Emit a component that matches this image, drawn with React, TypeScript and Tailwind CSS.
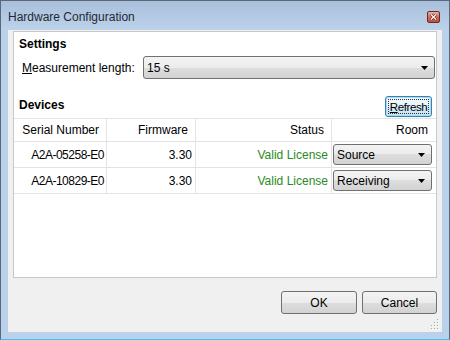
const combo =
  "flex items-center justify-between border border-[#707070] rounded-[3px] bg-[linear-gradient(#f3f3f3,#ececec_50%,#dedede_50%,#d2d2d2)] pl-[3px] pr-[6px] text-black";
const button =
  "flex items-center justify-center border border-[#707070] rounded-[3px] bg-[linear-gradient(#f3f3f3,#ececec_50%,#dedede_50%,#d2d2d2)] text-black";

function Arrow() {
  return (
    <svg width="7" height="4" viewBox="0 0 7 4">
      <path d="M0 0h7L3.5 4z" fill="#000" />
    </svg>
  );
}

function Combo({ value, className }: { value: string; className: string }) {
  return (
    <div className={`${combo} ${className}`}>
      <span>{value}</span>
      <Arrow />
    </div>
  );
}

const devices = [
  { serial: "A2A-05258-E0", firmware: "3.30", status: "Valid License", room: "Source" },
  { serial: "A2A-10829-E0", firmware: "3.30", status: "Valid License", room: "Receiving" },
];

export default function App() {
  return (
    <div className="w-[450px] h-[340px] flex flex-col border-t border-x border-[#5b6875] border-b border-b-[#3cc6e6] bg-[#b9d1ea] font-['Liberation_Sans',Arial,sans-serif] text-[12px] leading-[16px] text-black">
      {/* Title bar */}
      <div className="relative h-[29px] shrink-0 flex items-center pl-[7px] pt-[3px] bg-[linear-gradient(#a8bfdb,#bdd2ea)]">
        <span className="text-[#1e2a36]">Hardware Configuration</span>
        <div className="absolute right-[9px] top-[10px] w-[13px] h-[12px] flex items-center justify-center border border-[#6d2b24] rounded-[2px] bg-[linear-gradient(#eab0a5,#d46a5c_50%,#c24a3e)]">
          <svg width="7" height="6" viewBox="0 0 7 6">
            <path d="M1 0.5L6 5.5M6 0.5L1 5.5" stroke="#4a1a15" strokeWidth="2.4" />
            <path d="M1 0.5L6 5.5M6 0.5L1 5.5" stroke="#fff" strokeWidth="1.3" />
          </svg>
        </div>
      </div>

      {/* Client area */}
      <div className="relative mx-[7px] h-[302px] bg-[#f0f0f0] flex flex-col">
        <div className="mt-[1px] mx-[5px] h-[247px] border border-[#c8c8c8] bg-white flex flex-col">
          <div className="pl-[5px] pt-[4px] font-bold">Settings</div>

          <div className="mt-[4px] h-[23px] flex items-center">
            <span className="pl-[8px] w-[129px]">
              <span className="underline">M</span>easurement length:
            </span>
            <Combo value="15 s" className="h-[23px] flex-1 mr-[1px]" />
          </div>

          <div className="mt-[17px] h-[21px] flex items-start justify-between">
            <span className="pl-[5px] pt-[1px] font-bold">Devices</span>
            <div className="mr-[4px] w-[47px] h-[21px] border border-[#3c7fb1] rounded-[3px] bg-[linear-gradient(#f2f9fd,#e6f3fb_50%,#d4ebf8_50%,#c8e3f5)] shadow-[inset_0_0_0_1px_#9fe0f6] p-[2px]">
              <div className="h-full flex items-center justify-center border border-dotted border-[#333]">
                <span className="text-[11.5px] tracking-[-0.4px]">
                  <span className="underline">R</span>efresh
                </span>
              </div>
            </div>
          </div>

          {/* Table */}
          <div className="mt-[1px] border-t border-[#e3e3e3]">
            <div className="grid grid-cols-[93px_89px_136px_1fr] h-[23px] border-b border-[#e3e3e3]">
              <div className="border-r border-[#e3e3e3] flex items-center justify-end pr-[7px]">Serial Number</div>
              <div className="border-r border-[#e3e3e3] flex items-center justify-end pr-[7px]">Firmware</div>
              <div className="border-r border-[#e3e3e3] flex items-center justify-end pr-[7px]">Status</div>
              <div className="flex items-center justify-end pr-[8px]">Room</div>
            </div>
            {devices.map((d) => (
              <div
                key={d.serial}
                className="grid grid-cols-[93px_89px_136px_1fr] h-[26px] border-b border-[#e3e3e3]"
              >
                <div className="border-r border-[#e3e3e3] flex items-center justify-end pr-[2px] tracking-[-0.5px]">
                  {d.serial}
                </div>
                <div className="border-r border-[#e3e3e3] flex items-center justify-end pr-[3px]">{d.firmware}</div>
                <div className="border-r border-[#e3e3e3] flex items-center justify-end pr-[3px] text-[#2a8a1e]">
                  {d.status}
                </div>
                <div className="flex items-center pl-[1px]">
                  <Combo value={d.room} className="h-[21px] w-[99px]" />
                </div>
              </div>
            ))}
          </div>
        </div>

        <div className="mt-[13px] h-[23px] flex justify-end gap-[5px] pr-[5px]">
          <div className={`${button} w-[76px] h-[23px]`}>OK</div>
          <div className={`${button} w-[75px] h-[23px]`}>Cancel</div>
        </div>

        {/* Size grip */}
        <svg className="absolute right-[2px] bottom-[2px]" width="11" height="11" viewBox="0 0 11 11">
          {[
            [8, 0],
            [8, 3],
            [5, 3],
            [8, 6],
            [5, 6],
            [2, 6],
            [8, 9],
            [5, 9],
            [2, 9],
          ].map(([x, y]) => (
            <g key={`${x}-${y}`}>
              <rect x={x + 1} y={y + 1} width="1" height="1" fill="#fff" />
              <rect x={x} y={y} width="1" height="1" fill="#a0a8b0" />
            </g>
          ))}
        </svg>
      </div>
    </div>
  );
}
